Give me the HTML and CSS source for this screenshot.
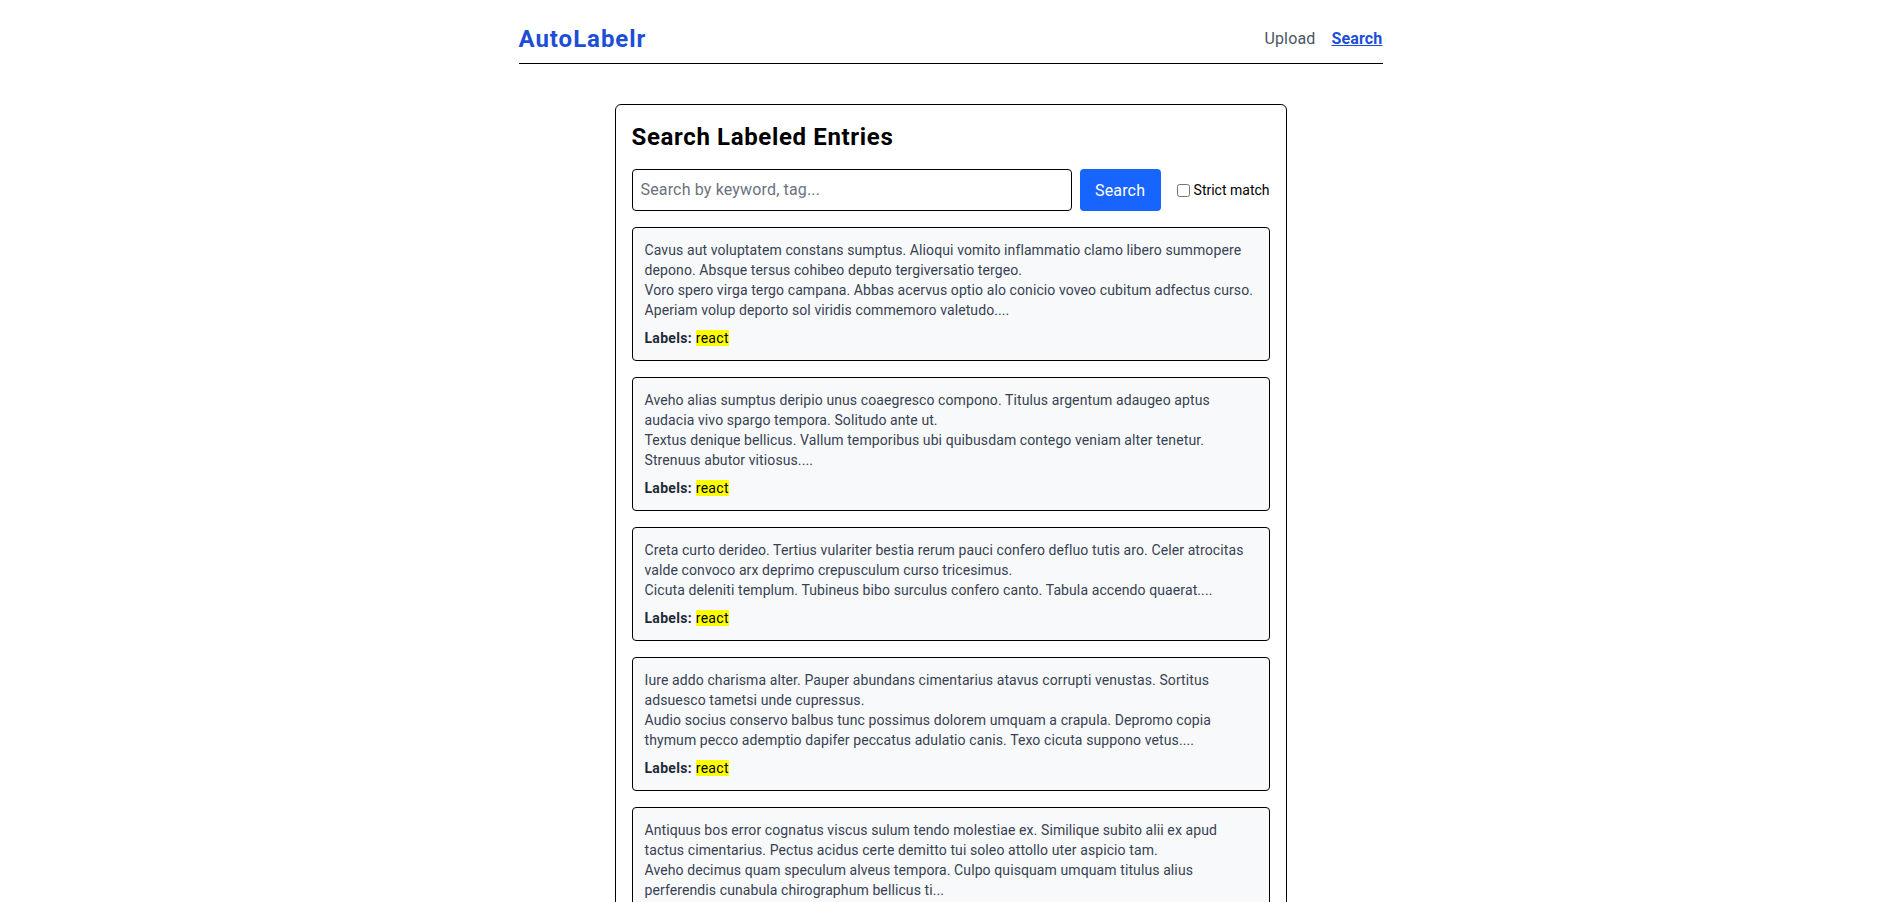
FILE: index.html
```html
<!DOCTYPE html>
<html lang="en">
<head>
<meta charset="utf-8">
<title>AutoLabelr</title>
<link rel="stylesheet" href="styles.css">
</head>
<body>
<div class="container">
  <header class="site-header">
    <a class="logo" href="#">AutoLabelr</a>
    <nav class="nav">
      <a class="nav-link" href="#">Upload</a>
      <a class="nav-link active" href="#">Search</a>
    </nav>
  </header>

  <main class="card">
    <h2 class="card-title">Search Labeled Entries</h2>
    <form class="search-row">
      <input class="search-input" type="text" placeholder="Search by keyword, tag...">
      <button class="search-btn" type="button">Search</button>
      <label class="strict"><input type="checkbox" class="strict-box">Strict match</label>
    </form>

    <div class="entries">
      <div class="entry">
        <p class="entry-text">Cavus aut voluptatem constans sumptus. Alioqui vomito inflammatio clamo libero summopere depono. Absque tersus cohibeo deputo tergiversatio tergeo.<br>Voro spero virga tergo campana. Abbas acervus optio alo conicio voveo cubitum adfectus curso. Aperiam volup deporto sol viridis commemoro valetudo....</p>
        <p class="entry-labels"><strong>Labels:</strong> <mark>react</mark></p>
      </div>
      <div class="entry">
        <p class="entry-text">Aveho alias sumptus deripio unus coaegresco compono. Titulus argentum adaugeo aptus audacia vivo spargo tempora. Solitudo ante ut.<br>Textus denique bellicus. Vallum temporibus ubi quibusdam contego veniam alter tenetur. Strenuus abutor vitiosus....</p>
        <p class="entry-labels"><strong>Labels:</strong> <mark>react</mark></p>
      </div>
      <div class="entry">
        <p class="entry-text">Creta curto derideo. Tertius vulariter bestia rerum pauci confero defluo tutis aro. Celer atrocitas valde convoco arx deprimo crepusculum curso tricesimus.<br>Cicuta deleniti templum. Tubineus bibo surculus confero canto. Tabula accendo quaerat....</p>
        <p class="entry-labels"><strong>Labels:</strong> <mark>react</mark></p>
      </div>
      <div class="entry">
        <p class="entry-text">Iure addo charisma alter. Pauper abundans cimentarius atavus corrupti venustas. Sortitus adsuesco tametsi unde cupressus.<br>Audio socius conservo balbus tunc possimus dolorem umquam a crapula. Depromo copia thymum pecco ademptio dapifer peccatus adulatio canis. Texo cicuta suppono vetus....</p>
        <p class="entry-labels"><strong>Labels:</strong> <mark>react</mark></p>
      </div>
      <div class="entry">
        <p class="entry-text">Antiquus bos error cognatus viscus sulum tendo molestiae ex. Similique subito alii ex apud tactus cimentarius. Pectus acidus certe demitto tui soleo attollo uter aspicio tam.<br>Aveho decimus quam speculum alveus tempora. Culpo quisquam umquam titulus alius perferendis cunabula chirographum bellicus ti...</p>
        <p class="entry-labels"><strong>Labels:</strong> <mark>react</mark></p>
      </div>
    </div>
  </main>
</div>
</body>
</html>
```
FILE: styles.css
```css
* { box-sizing: border-box; }

body {
  margin: 0;
  background: #ffffff;
  color: #111827;
  font-family: Roboto, "Liberation Sans", sans-serif;
}

.container {
  max-width: 896px;
  margin: 0 auto;
  padding: 0 16px 40px;
}

.site-header {
  display: flex;
  justify-content: space-between;
  align-items: center;
  padding: 23px 0 8px;
  border-bottom: 1px solid #000;
  margin-bottom: 40px;
}

.logo {
  font-size: 24px;
  line-height: 32px;
  font-weight: 700;
  letter-spacing: 0.04em;
  color: #1d4ed8;
  text-decoration: none;
}

.nav {
  display: flex;
  gap: 16px;
  font-size: 16px;
  line-height: 24px;
}

.nav-link {
  color: #4b5563;
  text-decoration: none;
  letter-spacing: 0.01em;
}

.nav-link.active {
  color: #1d4ed8;
  font-weight: 700;
  text-decoration: underline;
}

.card {
  display: block;
  max-width: 672px;
  margin: 0 auto;
  border: 1px solid #000;
  border-radius: 6px;
  padding: 16px;
}

.card-title {
  margin: 0 0 16px;
  font-size: 24px;
  line-height: 32px;
  font-weight: 700;
  letter-spacing: 0.027em;
  color: #000;
}

.search-row {
  display: flex;
  gap: 8px;
  margin-bottom: 16px;
}

.search-input {
  flex: 1;
  min-width: 0;
  padding: 8px;
  border: 1px solid #000;
  border-radius: 4px;
  font-family: inherit;
  font-size: 16px;
  line-height: 24px;
  letter-spacing: 0.01em;
  color: #111827;
}

.search-input::placeholder {
  color: #6b7280;
}

.search-btn {
  width: 81px;
  padding: 0;
  border: none;
  border-radius: 4px;
  background: #1864fe;
  color: #fff;
  font-family: inherit;
  font-size: 16px;
  letter-spacing: 0.01em;
}

.strict {
  display: flex;
  align-items: center;
  margin-left: 8px;
  font-size: 14px;
  color: #000;
}

.strict-box {
  width: 13px;
  height: 13px;
  margin: 0 4px 0 0;
}

.entries {
  display: flex;
  flex-direction: column;
  gap: 16px;
}

.entry {
  border: 1px solid #000;
  border-radius: 4px;
  background: #f8f9fb;
  padding: 12px;
}

.entry-text {
  margin: 0;
  font-size: 14px;
  line-height: 20px;
  letter-spacing: 0.1px;
  color: #374151;
}

.entry-labels {
  margin: 8px 0 0;
  font-size: 14px;
  line-height: 20px;
  letter-spacing: 0.3px;
  color: #1f2937;
}

.entry-labels strong {
  font-weight: 700;
}

.entry-labels mark {
  background: #ffff00;
  color: #000;
}
```
